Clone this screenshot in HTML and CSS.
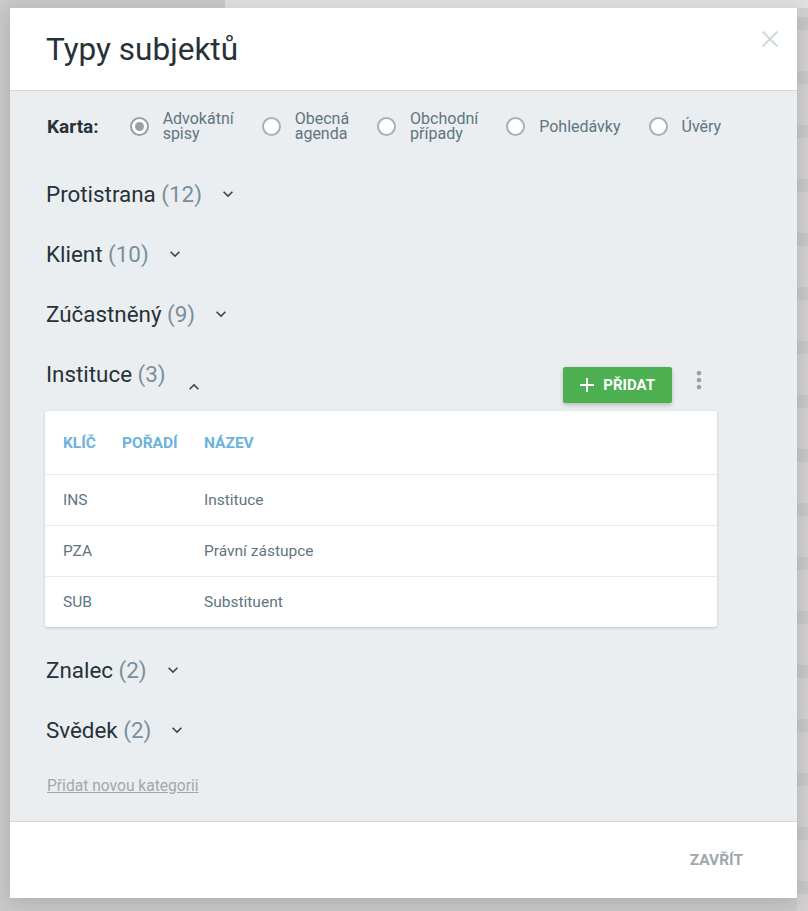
FILE: index.html
```html
<!doctype html>
<html lang="cs">
<head>
  <meta charset="utf-8">
  <title>Typy subjektů</title>
  <link rel="stylesheet" href="styles.css">
</head>

<body>
  <div class="modal">
    <!-- Header -->
    <div class="modal-header">
      <h1>Typy subjektů</h1>
      <button class="close" type="button" aria-label="Zavřít">
        <svg viewBox="0 0 24 24" width="22" height="22"><path d="M4 4L20 20M20 4L4 20" stroke="currentColor" stroke-width="2.2" fill="none"/></svg>
      </button>
    </div>

    <!-- Body -->
    <div class="modal-body">
      <div class="karta">
        <span class="karta-label">Karta:</span>
        <label class="radio checked"><span class="dot"></span><span class="radio-text">Advokátní<br>spisy</span></label>
        <label class="radio"><span class="dot"></span><span class="radio-text">Obecná<br>agenda</span></label>
        <label class="radio"><span class="dot"></span><span class="radio-text">Obchodní<br>případy</span></label>
        <label class="radio"><span class="dot"></span><span class="radio-text">Pohledávky</span></label>
        <label class="radio"><span class="dot"></span><span class="radio-text">Úvěry</span></label>
      </div>

      <div class="category">
        <h2>Protistrana <span class="count">(12)</span></h2>
        <svg class="chevron" viewBox="0 0 24 24"><path d="M7.41 8.59L12 13.17l4.59-4.58L18 10l-6 6-6-6 1.41-1.41z"/></svg>
      </div>
      <div class="category">
        <h2>Klient <span class="count">(10)</span></h2>
        <svg class="chevron" viewBox="0 0 24 24"><path d="M7.41 8.59L12 13.17l4.59-4.58L18 10l-6 6-6-6 1.41-1.41z"/></svg>
      </div>
      <div class="category">
        <h2>Zúčastněný <span class="count">(9)</span></h2>
        <svg class="chevron" viewBox="0 0 24 24"><path d="M7.41 8.59L12 13.17l4.59-4.58L18 10l-6 6-6-6 1.41-1.41z"/></svg>
      </div>

      <div class="category open">
        <h2>Instituce <span class="count">(3)</span></h2>
        <svg class="chevron" viewBox="0 0 24 24"><path d="M12 8l-6 6 1.41 1.41L12 10.83l4.59 4.58L18 14z"/></svg>
        <span class="spacer"></span>
        <button class="btn-add" type="button">
          <svg viewBox="0 0 24 24" width="24" height="24"><path d="M19 13h-6v6h-2v-6H5v-2h6V5h2v6h6v2z" fill="currentColor"/></svg>
          PŘIDAT
        </button>
        <svg class="more" viewBox="0 0 24 24"><path d="M12 8c1.1 0 2-.9 2-2s-.9-2-2-2-2 .9-2 2 .9 2 2 2zm0 2c-1.1 0-2 .9-2 2s.9 2 2 2 2-.9 2-2-.9-2-2-2zm0 6c-1.1 0-2 .9-2 2s.9 2 2 2 2-.9 2-2-.9-2-2-2z"/></svg>
      </div>

      <div class="card">
        <div class="row head">
          <span>KLÍČ</span><span>POŘADÍ</span><span>NÁZEV</span>
        </div>
        <div class="row">
          <span>INS</span><span></span><span>Instituce</span>
        </div>
        <div class="row">
          <span>PZA</span><span></span><span>Právní zástupce</span>
        </div>
        <div class="row">
          <span>SUB</span><span></span><span>Substituent</span>
        </div>
      </div>

      <div class="category after-card">
        <h2>Znalec <span class="count">(2)</span></h2>
        <svg class="chevron" viewBox="0 0 24 24"><path d="M7.41 8.59L12 13.17l4.59-4.58L18 10l-6 6-6-6 1.41-1.41z"/></svg>
      </div>
      <div class="category">
        <h2>Svědek <span class="count">(2)</span></h2>
        <svg class="chevron" viewBox="0 0 24 24"><path d="M7.41 8.59L12 13.17l4.59-4.58L18 10l-6 6-6-6 1.41-1.41z"/></svg>
      </div>

      <a class="new-category" href="#">Přidat novou kategorii</a>
    </div>

    <!-- Footer -->
    <div class="modal-footer">
      <button class="btn-close" type="button">ZAVŘÍT</button>
    </div>
  </div>
</body>
</html>
```

FILE: styles.css
```css
* {
  box-sizing: border-box;
}

body {
  margin: 0;
  min-height: 100vh;
  font-family: Roboto, 'Noto Sans', sans-serif;
  /* dimmed page behind the dialog */
  background:
    linear-gradient(#e1e0e0, #e1e0e0) right top / calc(100% - 225px) 8px no-repeat,
    repeating-linear-gradient(to bottom, #d3d1d1 0 17px, #c6c8c9 17px 30px, #d3d1d1 30px 54px) right top / 11px 100% no-repeat,
    #c9c9c9;
  padding: 8px 11px 13px 10px;
}

.modal {
  position: relative;
  width: 787px;
  height: 890px;
  display: flex;
  flex-direction: column;
  background: #ebeef1;
  box-shadow: 0 4px 20px rgba(0, 0, 0, 0.15);
}

.modal-header {
  height: 83px;
  flex-shrink: 0;
  background: #fff;
  border-bottom: 1px solid #d3d9dd;
  display: flex;
  align-items: center;
  padding: 0 36px;
}

h1 {
  margin: 0;
  font-size: 31.5px;
  font-weight: 400;
  color: #263238;
}

.close {
  position: absolute;
  top: 20px;
  right: 16px;
  border: none;
  background: none;
  padding: 0;
  color: #cfd8dc;
  cursor: pointer;
}

.close svg {
  display: block;
}

.modal-body {
  flex: 1;
  padding: 17px 80px 0 36px;
}

.karta {
  display: flex;
  align-items: center;
  height: 36px;
  margin-bottom: 20px;
}

.karta-label {
  font-size: 19px;
  font-weight: 700;
  color: #263238;
  margin-right: 31px;
  margin-left: 1px;
}

.radio {
  display: flex;
  align-items: center;
  margin-right: 28px;
  cursor: pointer;
}

.dot {
  width: 19px;
  height: 19px;
  border: 2px solid #a9afb3;
  border-radius: 50%;
  background: #fff;
  margin-right: 14px;
  flex-shrink: 0;
  display: flex;
  align-items: center;
  justify-content: center;
}

.radio.checked .dot {
  border-color: #9e9e9e;
}

.radio.checked .dot::after {
  content: '';
  width: 9px;
  height: 9px;
  border-radius: 50%;
  background: #9e9e9e;
}

.radio-text {
  font-size: 16px;
  line-height: 15px;
  color: #5f7580;
}

.category {
  display: flex;
  align-items: center;
  height: 60px;
}

.category h2 {
  margin: 0;
  font-size: 22.4px;
  font-weight: 400;
  color: #263238;
}

.count {
  color: #78909c;
}

.chevron {
  width: 20px;
  height: 20px;
  margin-left: 16px;
  fill: #37474f;
}

.category.open {
  align-items: flex-end;
}

.category.open h2 {
  line-height: 60px;
}

.category.open .chevron {
  margin-left: 18px;
  margin-bottom: 7px;
}

.spacer {
  flex: 1;
}

.btn-add {
  display: flex;
  align-items: center;
  gap: 4px;
  height: 36px;
  margin-bottom: 1px;
  padding: 0 17px 0 12px;
  border: none;
  border-radius: 2px;
  background: #4caf50;
  color: #fff;
  font-family: inherit;
  font-size: 15px;
  font-weight: 700;
  box-shadow: 0 2px 4px rgba(0, 0, 0, 0.22);
  cursor: pointer;
}

.btn-add svg {
  display: block;
}

.more {
  width: 28px;
  height: 28px;
  margin: 0 4px 10px 13px;
  fill: #9e9e9e;
}

.card {
  margin-top: 7px;
  background: #fff;
  border-radius: 3px;
  box-shadow: 0 1px 3px rgba(0, 0, 0, 0.18);
  margin-left: -1px;
}

.row {
  display: grid;
  grid-template-columns: 59px 82px 1fr;
  align-items: center;
  height: 51px;
  padding-left: 18px;
  border-top: 1px solid #e8eaeb;
  font-size: 15.5px;
  color: #5f7580;
}

.row.head {
  height: 63px;
  border-top: none;
  font-size: 15.5px;
  font-weight: 700;
  color: #6cb2dc;
}

.after-card {
  margin-top: 13px;
}

.new-category {
  display: inline-block;
  margin-top: 17px;
  margin-left: 1px;
  font-size: 15.6px;
  color: #a2a7ab;
  text-decoration: underline;
}

.modal-footer {
  height: 77px;
  flex-shrink: 0;
  background: #fff;
  border-top: 1px solid #d3d9dd;
  display: flex;
  align-items: center;
  justify-content: flex-end;
  padding-right: 38px;
}

.btn-close {
  border: none;
  background: none;
  padding: 8px 16px;
  font-family: inherit;
  font-size: 15.5px;
  font-weight: 700;
  color: #9ea7ab;
  cursor: pointer;
}
```
